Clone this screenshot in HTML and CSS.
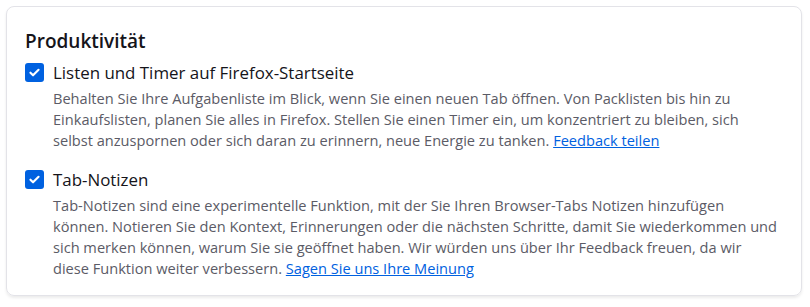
FILE: index.html
```html
<!DOCTYPE html>
<html lang="de">
<head>
<meta charset="utf-8">
<link rel="stylesheet" href="styles.css">
</head>
<body>
<section class="card">
  <h2 class="title">Produktivität</h2>
  <div class="option">
    <label class="row">
      <span class="box"><svg viewBox="0 0 16 16" width="13" height="13"><path d="M3 8.3l3.2 3.2L13 4.7" fill="none" stroke="#fff" stroke-width="2.6" stroke-linecap="round" stroke-linejoin="round"/></svg></span>
      <span class="label">Listen und Timer auf Firefox-Startseite</span>
    </label>
    <p class="desc">Behalten Sie Ihre Aufgabenliste im Blick, wenn Sie einen neuen Tab öffnen. Von Packlisten bis hin zu<br>Einkaufslisten, planen Sie alles in Firefox. Stellen Sie einen Timer ein, um konzentriert zu bleiben, sich<br>selbst anzuspornen oder sich daran zu erinnern, neue Energie zu tanken. <a href="#">Feedback teilen</a></p>
  </div>
  <div class="option">
    <label class="row">
      <span class="box"><svg viewBox="0 0 16 16" width="13" height="13"><path d="M3 8.3l3.2 3.2L13 4.7" fill="none" stroke="#fff" stroke-width="2.6" stroke-linecap="round" stroke-linejoin="round"/></svg></span>
      <span class="label">Tab-Notizen</span>
    </label>
    <p class="desc">Tab-Notizen sind eine experimentelle Funktion, mit der Sie Ihren Browser-Tabs Notizen hinzufügen<br>können. Notieren Sie den Kontext, Erinnerungen oder die nächsten Schritte, damit Sie wiederkommen und<br>sich merken können, warum Sie sie geöffnet haben. Wir würden uns über Ihr Feedback freuen, da wir<br>diese Funktion weiter verbessern. <a href="#">Sagen Sie uns Ihre Meinung</a></p>
  </div>
</section>
</body>
</html>
```
FILE: styles.css
```css
html, body {
  margin: 0;
  padding: 0;
  background: #ffffff;
}
body {
  padding: 6px 8px 10px 6px;
  font-family: "Open Sans", "Noto Sans", sans-serif;
  color: #15141a;
}
.card {
  box-sizing: border-box;
  width: 796px;
  height: 290px;
  border: 1px solid #e3e3e8;
  border-radius: 8px;
  box-shadow: 0 2px 3px rgba(0, 0, 0, 0.08);
  padding: 21px 18px 0 18px;
}
.title {
  margin: 0 0 5px 0;
  font-size: 19px;
  font-weight: 600;
  line-height: 26px;
}
.option {
  display: flex;
  flex-direction: column;
}
.option + .option {
  margin-top: 15px;
}
.row {
  display: flex;
  align-items: center;
  gap: 9px;
  height: 26px;
}
.box {
  width: 19px;
  height: 19px;
  border-radius: 3px;
  background: #0061e0;
  display: flex;
  align-items: center;
  justify-content: center;
}
.label {
  font-size: 16.9px;
}
.desc {
  margin: 3px 0 0 28px;
  width: 745px;
  font-size: 14.6px;
  line-height: 21px;
  color: #5b5b66;
}
.desc a {
  color: #0061e0;
  text-decoration: underline;
}
```
